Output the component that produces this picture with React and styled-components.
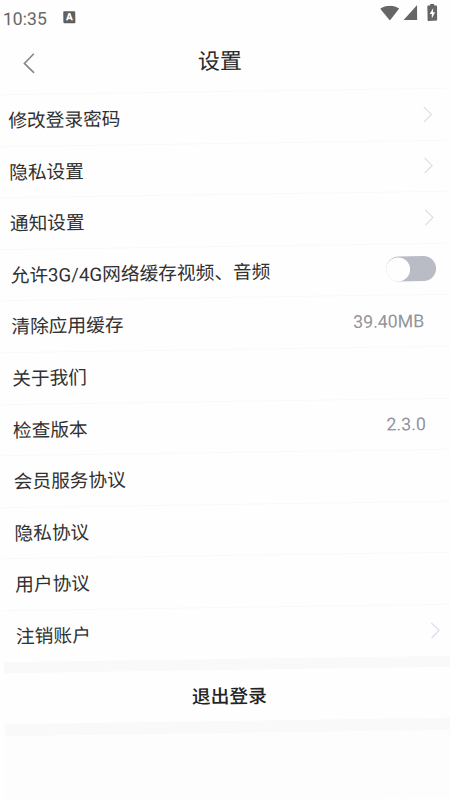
import React, {useState} from 'react';
import styled, {createGlobalStyle} from "styled-components";

const items = [
    {id: 1, label: "修改登录密码", arrow: true},
    {id: 2, label: "隐私设置", arrow: true},
    {id: 3, label: "通知设置", arrow: true},
    {id: 4, label: "允许3G/4G网络缓存视频、音频", toggle: true},
    {id: 5, label: "清除应用缓存", value: "39.40MB"},
    {id: 6, label: "关于我们"},
    {id: 7, label: "检查版本", value: "2.3.0"},
    {id: 8, label: "会员服务协议"},
    {id: 9, label: "隐私协议"},
    {id: 10, label: "用户协议"},
    {id: 11, label: "注销账户", arrow: true},
];

export default function App() {
    const [mobileCache,setMobileCache] = useState(false);

    let renderItems = () => {
        return items.map((item) => (
            <Item key={item.id}>
                <Label>{item.label}</Label>
                {item.value && <Value>{item.value}</Value>}
                {item.toggle && (
                    <Toggle
                        role="switch"
                        aria-checked={mobileCache}
                        $on={mobileCache}
                        onClick={() => setMobileCache(!mobileCache)}
                    >
                        <Knob />
                    </Toggle>
                )}
                {item.arrow && (
                    <Arrow viewBox="0 0 10 18">
                        <path d="M0.8 1 L8.8 9 L0.8 17" />
                    </Arrow>
                )}
            </Item>
        ));
    };

    return (
        <>
            <GlobalStyle />
            <Screen>
                <StatusBar>
                    <Time>10:35</Time>
                    <Badge>A</Badge>
                    <StatusIcons>
                        <svg width="19" height="15" viewBox="0 0 19 15">
                            <path d="M9.5 15 L0 3.2 C5 -0.9 14 -0.9 19 3.2 Z" />
                        </svg>
                        <svg width="14" height="15" viewBox="0 0 14 15">
                            <path d="M14 0 V15 H0 Z" />
                        </svg>
                        <Battery width="10" height="17" viewBox="0 0 10 17">
                            <path fillRule="evenodd" d="M3 0 H7 V1.6 H9 Q10 1.6 10 2.6 V16 Q10 17 9 17 H1 Q0 17 0 16 V2.6 Q0 1.6 1 1.6 H3 Z M6 4.2 L2.4 10.2 H4.5 V14.6 L7.8 8.4 H5.7 Z" />
                        </Battery>
                    </StatusIcons>
                </StatusBar>
                <Header>
                    <Back viewBox="0 0 12 22">
                        <path d="M11.2 1 L1.2 11 L11.2 21" />
                    </Back>
                    <Title>设置</Title>
                </Header>
                <List>
                    {renderItems()}
                </List>
                <Footer>
                    <Logout>退出登录</Logout>
                </Footer>
            </Screen>
        </>
    )
}
const GlobalStyle = createGlobalStyle `
    * {
        box-sizing: border-box;
    }
    body {
        margin: 0;
        height: 800px;
        overflow: hidden;
        background: #fefefe;
        font-family: Roboto, "Noto Sans CJK SC", sans-serif;
    }
`;
const Screen = styled.div `
    display: flex;
    flex-direction: column;
    width: 450px;
    height: 800px;
    background: #fdfdfd;
    transform: rotate(-0.85deg);
`;
const StatusBar = styled.div `
    display: flex;
    align-items: center;
    height: 30px;
    padding: 0 7px 0 8.5px;
    background: #fefefe;
    color: #666;
`;
const Time = styled.span `
    width: 60.5px;
    padding-top: 1px;
    font-size: 17.7px;
    line-height: 20px;
`;
const Badge = styled.span `
    width: 12px;
    height: 12px;
    border-radius: 1px;
    background: #5f5f5f;
    color: #fff;
    font-size: 10px;
    font-weight: 900;
    line-height: 12px;
    text-align: center;
`;
const StatusIcons = styled.div `
    display: flex;
    align-items: center;
    gap: 4px;
    margin-left: auto;
    fill: #666;
`;
const Battery = styled.svg `
    margin-left: 6px;
`;
const Header = styled.header `
    display: grid;
    grid-template-columns: 40px 1fr 40px;
    align-items: center;
    height: 61px;
    background: #fefefe;
`;
const Back = styled.svg `
    width: 12px;
    height: 21px;
    justify-self: end;
    fill: none;
    stroke: #85878d;
    stroke-width: 1.7;
`;
const Title = styled.h1 `
    margin: 0;
    padding-top: 2px;
    color: #2a2a2a;
    font-size: 22px;
    font-weight: 400;
    line-height: 32px;
    text-align: center;
`;
const List = styled.ul `
    margin: 0;
    padding: 0;
    list-style: none;
    background: #fefefe;
`;
const Item = styled.li `
    display: flex;
    align-items: center;
    justify-content: space-between;
    height: 51.6px;
    padding: 0 12.5px;
    border-top: 1px solid #f9f9f9;
`;
const Label = styled.span `
    padding-top: 1.5px;
    color: #303030;
    font-size: 18.7px;
    line-height: 28px;
`;
const Value = styled.span `
    margin-right: 12px;
    color: #92949b;
    font-size: 17.8px;
    line-height: 28px;
`;
const Toggle = styled.button `
    display: flex;
    justify-content: ${props => props.$on ? "flex-end" : "flex-start"};
    width: 50px;
    height: 25px;
    margin-top: -1px;
    padding: 0.5px;
    border: 0;
    border-radius: 13px;
    background: #b9bcc5;
`;
const Knob = styled.span `
    width: 24px;
    height: 24px;
    border-radius: 50%;
    background: #fefefe;
`;
const Arrow = styled.svg `
    width: 10px;
    height: 17px;
    margin-right: 0.5px;
    fill: none;
    stroke: #d9dce6;
    stroke-width: 1.2;
`;
const Footer = styled.div `
    padding: 11.7px 0;
    background: #f9f9f9;
`;
const Logout = styled.div `
    height: 51.2px;
    background: #fefefe;
    color: #222;
    font-size: 18.7px;
    font-weight: 500;
    line-height: 54px;
    text-align: center;
`;
